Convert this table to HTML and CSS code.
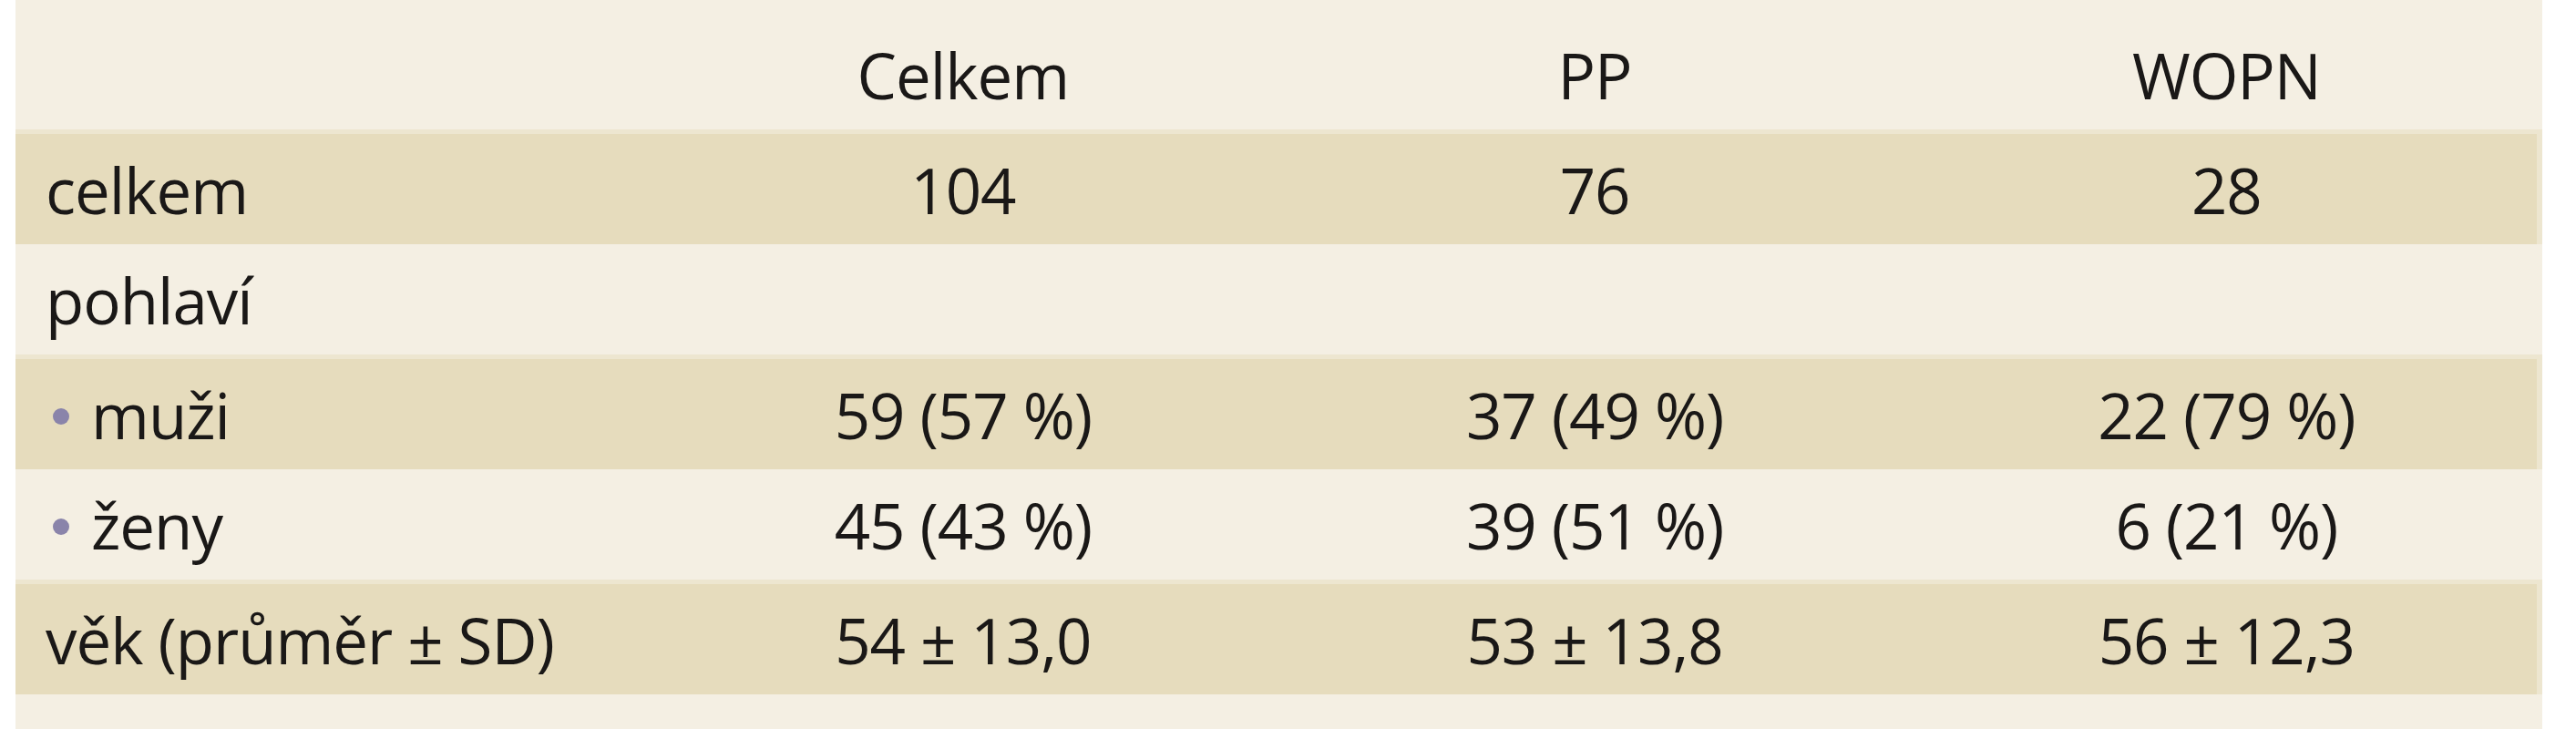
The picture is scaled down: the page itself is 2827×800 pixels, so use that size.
FILE: index.html
```html
<!DOCTYPE html>
<html lang="cs">
<head>
<meta charset="utf-8">
<title>Tabulka</title>
<link rel="stylesheet" href="styles.css">
</head>
<body>
<div class="panel">
  <div class="row head">
    <div class="cell label"></div>
    <div class="cell">Celkem</div>
    <div class="cell">PP</div>
    <div class="cell">WOPN</div>
  </div>
  <div class="row dark">
    <div class="cell label">celkem</div>
    <div class="cell">104</div>
    <div class="cell">76</div>
    <div class="cell">28</div>
  </div>
  <div class="row">
    <div class="cell label">pohlaví</div>
    <div class="cell"></div>
    <div class="cell"></div>
    <div class="cell"></div>
  </div>
  <div class="row dark">
    <div class="cell label"><span class="dot"></span>muži</div>
    <div class="cell">59 (57 %)</div>
    <div class="cell">37 (49 %)</div>
    <div class="cell">22 (79 %)</div>
  </div>
  <div class="row">
    <div class="cell label"><span class="dot"></span>ženy</div>
    <div class="cell">45 (43 %)</div>
    <div class="cell">39 (51 %)</div>
    <div class="cell">6 (21 %)</div>
  </div>
  <div class="row dark">
    <div class="cell label">věk (průměr ± SD)</div>
    <div class="cell">54 ± 13,0</div>
    <div class="cell">53 ± 13,8</div>
    <div class="cell">56 ± 12,3</div>
  </div>
</div>
</body>
</html>
```
FILE: styles.css
```css
html, body {
  margin: 0;
  padding: 0;
  background: #ffffff;
}
body {
  padding-left: 17px;
}
.panel {
  width: 2773px;
  height: 800px;
  background: #f4efe3;
  font-family: "Open Sans", "DejaVu Sans", sans-serif;
  font-size: 69px;
  font-weight: 500;
  line-height: 82px;
  color: #1a1817;
  letter-spacing: -1px;
}
.row {
  display: grid;
  grid-template-columns: repeat(4, 1fr);
  align-items: center;
  height: 121px;
  box-sizing: border-box;
}
.row.head {
  height: 142px;
  align-items: start;
  padding-top: 41px;
}
.row.dark {
  height: 126px;
  padding-top: 5px;
  background: #e6dcbd;
  box-shadow: inset 0 5px 0 #ede6d0, inset -6px 0 0 #ede6d0;
}
.cell {
  text-align: center;
  white-space: nowrap;
}
.cell.label {
  text-align: left;
  padding-left: 33px;
  display: flex;
  align-items: center;
}
.dot {
  display: inline-block;
  width: 18px;
  height: 18px;
  border-radius: 50%;
  background: #8a84aa;
  margin-left: 8px;
  margin-right: 24px;
  position: relative;
  top: 2px;
}
```
